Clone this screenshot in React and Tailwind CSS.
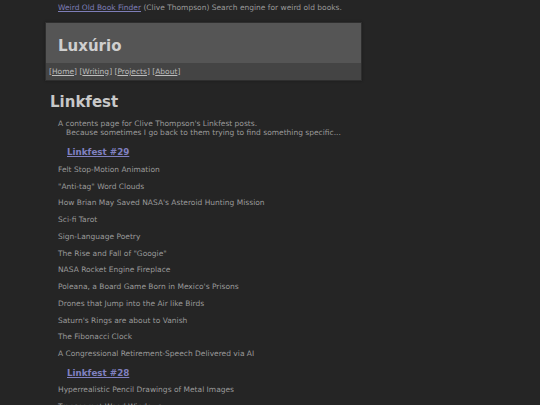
const FONT = { fontFamily: '"DejaVu Sans", Verdana, sans-serif' }

const SECTIONS = [
  {
    title: 'Linkfest #29',
    items: [
      'Felt Stop-Motion Animation',
      '"Anti-tag" Word Clouds',
      "How Brian May Saved NASA's Asteroid Hunting Mission",
      'Sci-fi Tarot',
      'Sign-Language Poetry',
      'The Rise and Fall of "Googie"',
      'NASA Rocket Engine Fireplace',
      "Poleana, a Board Game Born in Mexico's Prisons",
      'Drones that Jump into the Air like Birds',
      "Saturn's Rings are about to Vanish",
      'The Fibonacci Clock',
      'A Congressional Retirement-Speech Delivered via AI',
    ],
  },
  {
    title: 'Linkfest #28',
    items: [
      'Hyperrealistic Pencil Drawings of Metal Images',
      'Transparent Wood Windows',
    ],
  },
]

export default function App() {
  return (
    <div className="w-[540px] h-[405px] overflow-hidden bg-[#252525] text-[#9a9a9a]" style={FONT}>
      <div className="pl-[58px] pt-[3px] text-[7.5px] leading-[10px]">
        <a className="text-[#7e7eb8] underline">Weird Old Book Finder</a> (Clive Thompson) Search engine for weird old books.
      </div>

      <div className="ml-[45px] mt-[9px] w-[317px] border border-[#2e2e2e] shadow-[0_0_2px_#1a1a1a]">
        <div className="bg-[#555555] h-[40px] pl-[12px] flex items-center pt-[6px]">
          <h1 className="text-[15px] font-bold text-[#cfcfcf]">Luxúrio</h1>
        </div>
        <div className="bg-[#444444] h-[17px] pl-[3px] flex items-center text-[7.5px] text-[#bdbdbd]">
          [<a className="underline">Home</a>]&nbsp;[<a className="underline">Writing</a>]&nbsp;[<a className="underline">Projects</a>]&nbsp;[<a className="underline">About</a>]
        </div>
      </div>

      <h2 className="ml-[50px] mt-[11px] text-[15px] leading-[20px] font-bold text-[#c8c8c8]">Linkfest</h2>

      <div className="ml-[58px] mt-[7px] mb-[8px] text-[7.5px] leading-[9px]">
        <div>A contents page for Clive Thompson's Linkfest posts.</div>
        <div className="pl-[8px]">Because sometimes I go back to them trying to find something specific...</div>
      </div>

      {SECTIONS.map(section => (
        <div key={section.title}>
          <div className="ml-[67px] mt-[3.5px] text-[8.75px] leading-[14px] font-bold">
            <a className="text-[#8080c0] underline">{section.title}</a>
          </div>
          <ul className="ml-[58px] mt-[2px] text-[7.5px]">
            {section.items.map(item => (
              <li key={item} className="h-[16.75px] flex items-center">{item}</li>
            ))}
          </ul>
        </div>
      ))}
    </div>
  )
}
